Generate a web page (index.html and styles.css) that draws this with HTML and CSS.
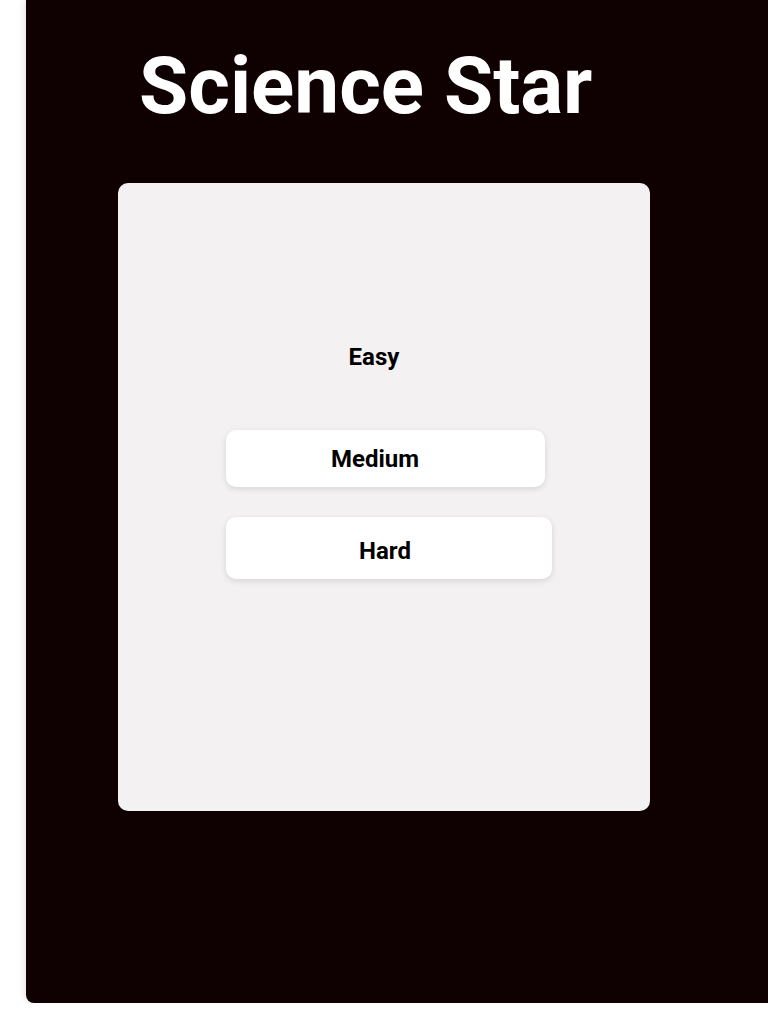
FILE: index.html
```html
<!DOCTYPE html>
<html lang="en">
<head>
    <meta charset="UTF-8">
    <title>Science Star</title>
    <link rel="stylesheet" href="styles.css">
</head>
<body>

    <!-- Main panel -->
    <main class="panel">
        <h1 class="title">Science Star</h1>

        <!-- Difficulty picker -->
        <section class="card">
            <div class="levels">
                <button class="level level-easy">Easy</button>
                <button class="level level-medium">Medium</button>
                <button class="level level-hard">Hard</button>
            </div>
        </section>
    </main>

</body>
</html>
```

FILE: styles.css
```css
body {
    margin: 0;
    background: #ffffff;
    font-family: Roboto, 'Liberation Sans', Arial, sans-serif;
    overflow: hidden;
}

.panel {
    margin-left: 26px;
    width: 770px;
    height: 1003px;
    background: #0f0002;
    border-radius: 0 0 0 8px;
    box-shadow: 0 0 8px rgba(0, 0, 0, 0.15);
    padding-top: 46px;
    box-sizing: border-box;
}

.title {
    margin: 0 0 57px 113px;
    color: #ffffff;
    font-size: 80px;
    font-weight: 700;
    line-height: 1;
}

.card {
    margin-left: 92px;
    width: 532px;
    height: 628px;
    background: #f3f1f2;
    border-radius: 10px;
    box-sizing: border-box;
    padding: 148px 0 0 108px;
}

.levels {
    display: flex;
    flex-direction: column;
    align-items: flex-start;
}

.level {
    font-family: inherit;
    font-size: 24px;
    font-weight: 700;
    color: #000000;
    background: #ffffff;
    border: none;
    border-radius: 10px;
    box-shadow: 0 2px 6px rgba(0, 0, 0, 0.12);
    padding: 0;
}

.level-easy {
    width: 296px;
    height: 52px;
    background: transparent;
    box-shadow: none;
    margin-bottom: 47px;
}

.level-medium {
    width: 319px;
    height: 57px;
    padding-right: 21px;
    margin-bottom: 30px;
}

.level-hard {
    width: 326px;
    height: 62px;
    padding: 6px 8px 0 0;
}
```
